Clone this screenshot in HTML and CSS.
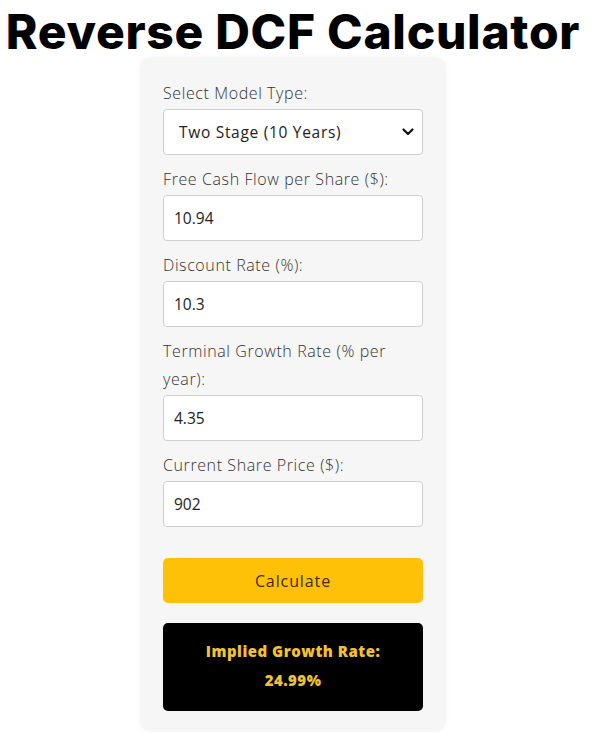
FILE: index.html
```html
<!DOCTYPE html>
<html lang="en">
<head>
<meta charset="utf-8">
<title>Reverse DCF Calculator</title>
<link rel="stylesheet" href="styles.css">
</head>
<body>
<h1 class="title">Reverse DCF Calculator</h1>
<div class="card">
  <label class="label" for="model">Select Model Type:</label>
  <div class="select-wrap">
    <select id="model" class="field select">
      <option>Two Stage (10 Years)</option>
    </select>
    <svg class="chev" width="12" height="8" viewBox="0 0 12 8"><path d="M1.5 1.5 L6 6 L10.5 1.5" fill="none" stroke="#111" stroke-width="2.2" stroke-linecap="round" stroke-linejoin="round"/></svg>
  </div>
  <label class="label" for="fcf">Free Cash Flow per Share ($):</label>
  <input id="fcf" class="field" type="text" value="10.94">
  <label class="label" for="dr">Discount Rate (%):</label>
  <input id="dr" class="field" type="text" value="10.3">
  <label class="label" for="tg">Terminal Growth Rate (% per year):</label>
  <input id="tg" class="field" type="text" value="4.35">
  <label class="label" for="sp">Current Share Price ($):</label>
  <input id="sp" class="field" type="text" value="902">
  <button class="btn" type="button">Calculate</button>
  <div class="result">Implied Growth Rate:<br>24.99%</div>
</div>
</body>
</html>
```
FILE: styles.css
```css
html, body {
  margin: 0;
  padding: 0;
  background: #ffffff;
}
body {
  display: flex;
  flex-direction: column;
  align-items: center;
  padding-right: 6px;
  font-family: "Open Sans", "Liberation Sans", sans-serif;
  color: #333;
}
.title {
  margin: 3px 0 0 0;
  font-family: "Inter", "Liberation Sans", sans-serif;
  font-weight: 800;
  font-size: 48px;
  line-height: 58px;
  color: #000;
  letter-spacing: 0.7px;
  white-space: nowrap;
}
.card {
  box-sizing: border-box;
  width: 306px;
  margin-top: -4px;
  padding: 22px 23px 21px 23px;
  background: #f6f6f6;
  border-radius: 12px;
  box-shadow: 0 0 6px rgba(0,0,0,0.04);
  display: flex;
  flex-direction: column;
}
.label {
  display: block;
  font-size: 16px;
  font-weight: 300;
  line-height: 28px;
  margin-bottom: 2px;
  color: #333;
  letter-spacing: 0.6px;
}
.field {
  box-sizing: border-box;
  width: 100%;
  height: 46px;
  margin: 0 0 10px 0;
  padding: 0 10px;
  background: #fff;
  border: 1px solid #cfcfcf;
  border-radius: 4px;
  font-family: "Open Sans", "Liberation Sans", sans-serif;
  font-size: 15.5px;
  color: #222;
  outline: none;
}
.select-wrap {
  position: relative;
}
.select {
  -webkit-appearance: none;
  appearance: none;
  padding-left: 15px;
  letter-spacing: 0.7px;
}
.chev {
  position: absolute;
  right: 9px;
  top: 19px;
  pointer-events: none;
}
.btn {
  margin-top: 21px;
  height: 45px;
  border: none;
  border-radius: 5px;
  background: #ffc107;
  color: #3a2c05;
  font-family: "Open Sans", "Liberation Sans", sans-serif;
  font-size: 16px;
  font-weight: 400;
  letter-spacing: 0.9px;
  cursor: pointer;
}
.result {
  margin-top: 20px;
  padding: 14px 10px 16px;
  background: #000;
  border-radius: 5px;
  color: #f3c234;
  font-weight: 800;
  font-size: 15px;
  line-height: 29px;
  text-align: center;
  letter-spacing: 0.5px;
}
```
